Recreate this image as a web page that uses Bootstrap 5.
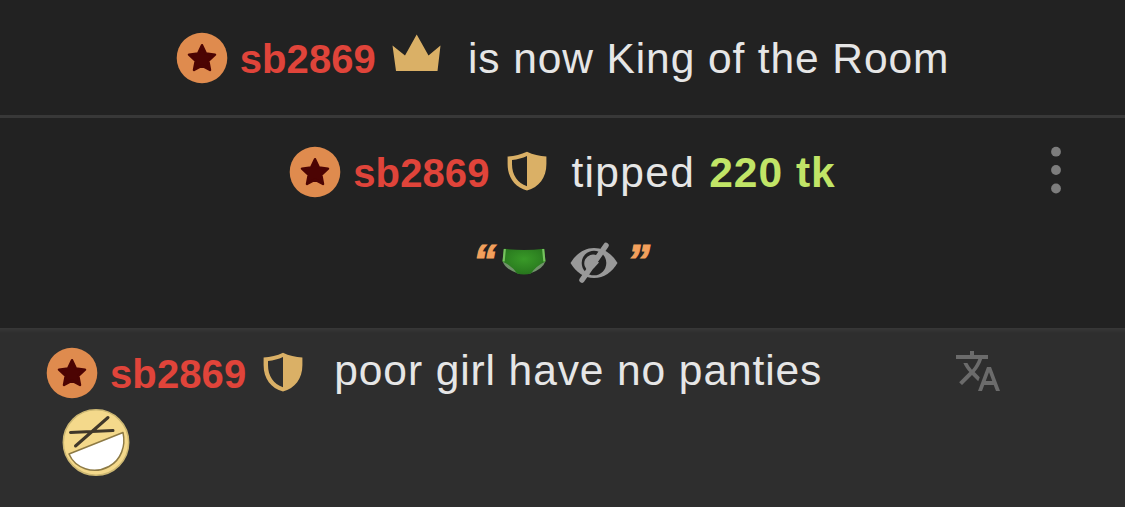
<!DOCTYPE html>
<html lang="en">
<head>
  <meta charset="UTF-8">
  <title>Room chat</title>
  <meta name="viewport" content="width=device-width, initial-scale=1">
  <link href="https://cdn.jsdelivr.net/npm/bootstrap@5.3.3/dist/css/bootstrap.min.css" rel="stylesheet">
  <style>
    body {
      background-color: #222;
      color: #e6e6e6;
      font-family: "Liberation Sans", Arial, sans-serif;
      font-size: 42.5px;
      line-height: 46px;
      letter-spacing: .9px;
      overflow: hidden;
    }
    svg {
      display: block;
      flex-shrink: 0;
    }
    .chat {
      height: 507px;
    }
    .notice-king {
      height: 118px;
      padding-top: 32px;
      border-bottom: 3px solid #383838;
    }
    .notice-tip {
      height: 210px;
      padding-top: 28px;
    }
    .message {
      background: linear-gradient(#383838, #2e2e2e 5px);
      padding: 19px 0 0 46px;
    }
    .user-name {
      color: #e0443a;
      font-size: 40px;
      font-weight: 700;
      letter-spacing: .1px;
      margin: 4px 0 0 12px;
    }
    .icon-crown {
      margin: 2px 0 0 16px;
    }
    .icon-shield {
      margin: 5px 0 0 17px;
    }
    .msg-text {
      margin: 4px 0 0 27px;
    }
    .notice-tip .msg-text {
      letter-spacing: 1.3px;
      margin-left: 25px;
    }
    .tip-amount {
      color: #c1e567;
      font-weight: 700;
      letter-spacing: 1px;
      margin-left: 1px;
    }
    .message .msg-text {
      margin: 1px 0 0 31px;
    }
    .tip-note {
      margin-top: 40px;
      padding-right: 2px;
    }
    .quote {
      color: #f3a05c;
      font-size: 46px;
      font-style: italic;
      font-weight: 700;
      letter-spacing: 0;
      width: 23px;
      -webkit-text-stroke: 1.1px #f3a05c;
    }
    .icon-brief {
      margin: 10px 24px 0 6px;
    }
    .icon-hidden {
      margin: 4px 9px 0 0;
    }
    .icon-menu {
      top: 28px;
      right: 63px;
    }
    .icon-translate {
      margin-right: 123px;
    }
    .icon-laugh {
      margin: 9px 0 0 16px;
    }
  </style>
</head>
<body>
  <!-- shared icons -->
  <svg class="d-none">
    <symbol id="star" viewBox="0 0 52 52">
      <circle cx="26" cy="26" r="25.3" fill="#df8b4e"/>
      <path d="M26 13.200l3.900 8.300 9.100 1.200-6.700 6.200 1.700 9.100-8-4.400-8 4.400 1.700-9.100-6.700-6.200 9.100-1.200z" fill="#4c0403" stroke="#4c0403" stroke-width="2.500" stroke-linejoin="round"/>
    </symbol>
    <symbol id="shield" viewBox="0 0 40 40">
      <path d="M20 .8C14 3.600 7.500 5.200.6 5.600V13C.6 26.500 8 36.500 20 39.400 32 36.500 39.400 26.500 39.400 13V5.600C32.500 5.200 26 3.600 20 .8zM20 5v30.300C10.600 32 5 24 5 13V9C10.500 8.500 15.500 7 20 5z" fill="#dab066" fill-rule="evenodd"/>
    </symbol>
  </svg>

  <div class="chat d-flex flex-column">
    <div class="notice-king d-flex justify-content-center align-items-start">
      <svg width="52" height="52"><use href="#star"/></svg>
      <span class="user-name">sb2869</span>
      <svg class="icon-crown" width="49" height="38" viewBox="0 0 49 38">
        <path d="M4 37L.5 11.500 13 21.500 24.700.5 36.500 21.500 48.500 11.500 45.500 37z" fill="#dab066"/>
      </svg>
      <span class="msg-text">is now King of the Room</span>
    </div>

    <div class="notice-tip position-relative">
      <div class="d-flex justify-content-center align-items-start">
        <svg width="52" height="52"><use href="#star"/></svg>
        <span class="user-name">sb2869</span>
        <svg class="icon-shield" width="40" height="40"><use href="#shield"/></svg>
        <span class="msg-text">tipped <span class="tip-amount">220 tk</span></span>
      </div>
      <div class="tip-note d-flex justify-content-center align-items-start">
        <span class="quote">“</span>
        <svg class="icon-brief" width="44" height="27" viewBox="0 0 44 27">
          <defs>
            <radialGradient id="cloth" cx=".5" cy=".4" r=".6">
              <stop offset="0" stop-color="#399a28"/>
              <stop offset="1" stop-color="#27751d"/>
            </radialGradient>
          </defs>
          <path d="M1 14Q3 21 16 25.500L28 25.500Q41 21 43 14z" fill="#71936b"/>
          <path d="M2 .8Q22 3.200 42 .8L43.500 13.500Q34 18 29 25.500Q22 27.500 15 25.500Q10 18 .5 13.500z" fill="url(#cloth)"/>
          <path d="M2.800 1L1.600 13.500M41.200 1L42.400 13.500" stroke="#76c25f" stroke-width="2.200"/>
        </svg>
        <svg class="icon-hidden" width="48" height="42" viewBox="0 0 48 42">
          <path d="M.5 21C6 12 14 6 24 6S42 12 47.500 21C42 30 34 36 24 36S6 30 .5 21z" fill="#999"/>
          <circle cx="24" cy="21" r="12.300" fill="#222"/>
          <path d="M27 13.500a8.500 8.500 0 1 0-8 15.500l5-3 5-5.500-3-2z" fill="#999"/>
          <path d="M36 3.500L12 38" stroke="#999" stroke-width="5.500" stroke-linecap="round"/>
        </svg>
        <span class="quote">”</span>
      </div>
      <svg class="icon-menu position-absolute" width="12" height="50" viewBox="0 0 12 50">
        <g fill="#7d7d7d">
          <circle cx="6" cy="5.700" r="4.900"/>
          <circle cx="6" cy="24" r="4.900"/>
          <circle cx="6" cy="42.500" r="4.900"/>
        </g>
      </svg>
    </div>

    <div class="message flex-grow-1">
      <div class="d-flex align-items-start">
        <svg width="52" height="52"><use href="#star"/></svg>
        <span class="user-name">sb2869</span>
        <svg class="icon-shield" width="40" height="40"><use href="#shield"/></svg>
        <span class="msg-text">poor girl have no panties</span>
        <svg class="icon-translate ms-auto" width="48" height="48" viewBox="0 0 24 24">
          <path d="M12.870 15.070l-2.540-2.510.03-.03c1.740-1.940 2.980-4.170 3.710-6.530H17V4h-7V2H8v2H1v1.990h11.170C11.500 7.920 10.440 9.750 9 11.350 8.070 10.320 7.300 9.190 6.690 8h-2c.73 1.630 1.730 3.170 2.980 4.560l-5.090 5.020L4 19l5-5 3.110 3.110.76-2.040zM18.500 10h-2L12 22h2l1.120-3h4.750L21 22h2l-4.500-12zm-2.620 7l1.620-4.330L19.120 17h-3.240z" fill="#6b6b6b"/>
        </svg>
      </div>
      <svg class="icon-laugh" width="68" height="70" viewBox="0 0 68 70">
        <circle cx="34" cy="34.500" r="32.700" fill="#f4d98b" stroke="#cdb873" stroke-width="1.500"/>
        <path d="M7 46L61 24.500C64 38 59 52 47 58.500 31 67 13 60 7 46z" fill="#fff" stroke="#8d7a45" stroke-width="1.500" stroke-linejoin="round"/>
        <path d="M8.500 24.500L51 22.500M13.500 38L46 9.500" stroke="#40382a" stroke-width="3" stroke-linecap="round"/>
      </svg>
    </div>
  </div>

  <script src="https://cdn.jsdelivr.net/npm/bootstrap@5.3.3/dist/js/bootstrap.bundle.min.js"></script>
</body>
</html>
